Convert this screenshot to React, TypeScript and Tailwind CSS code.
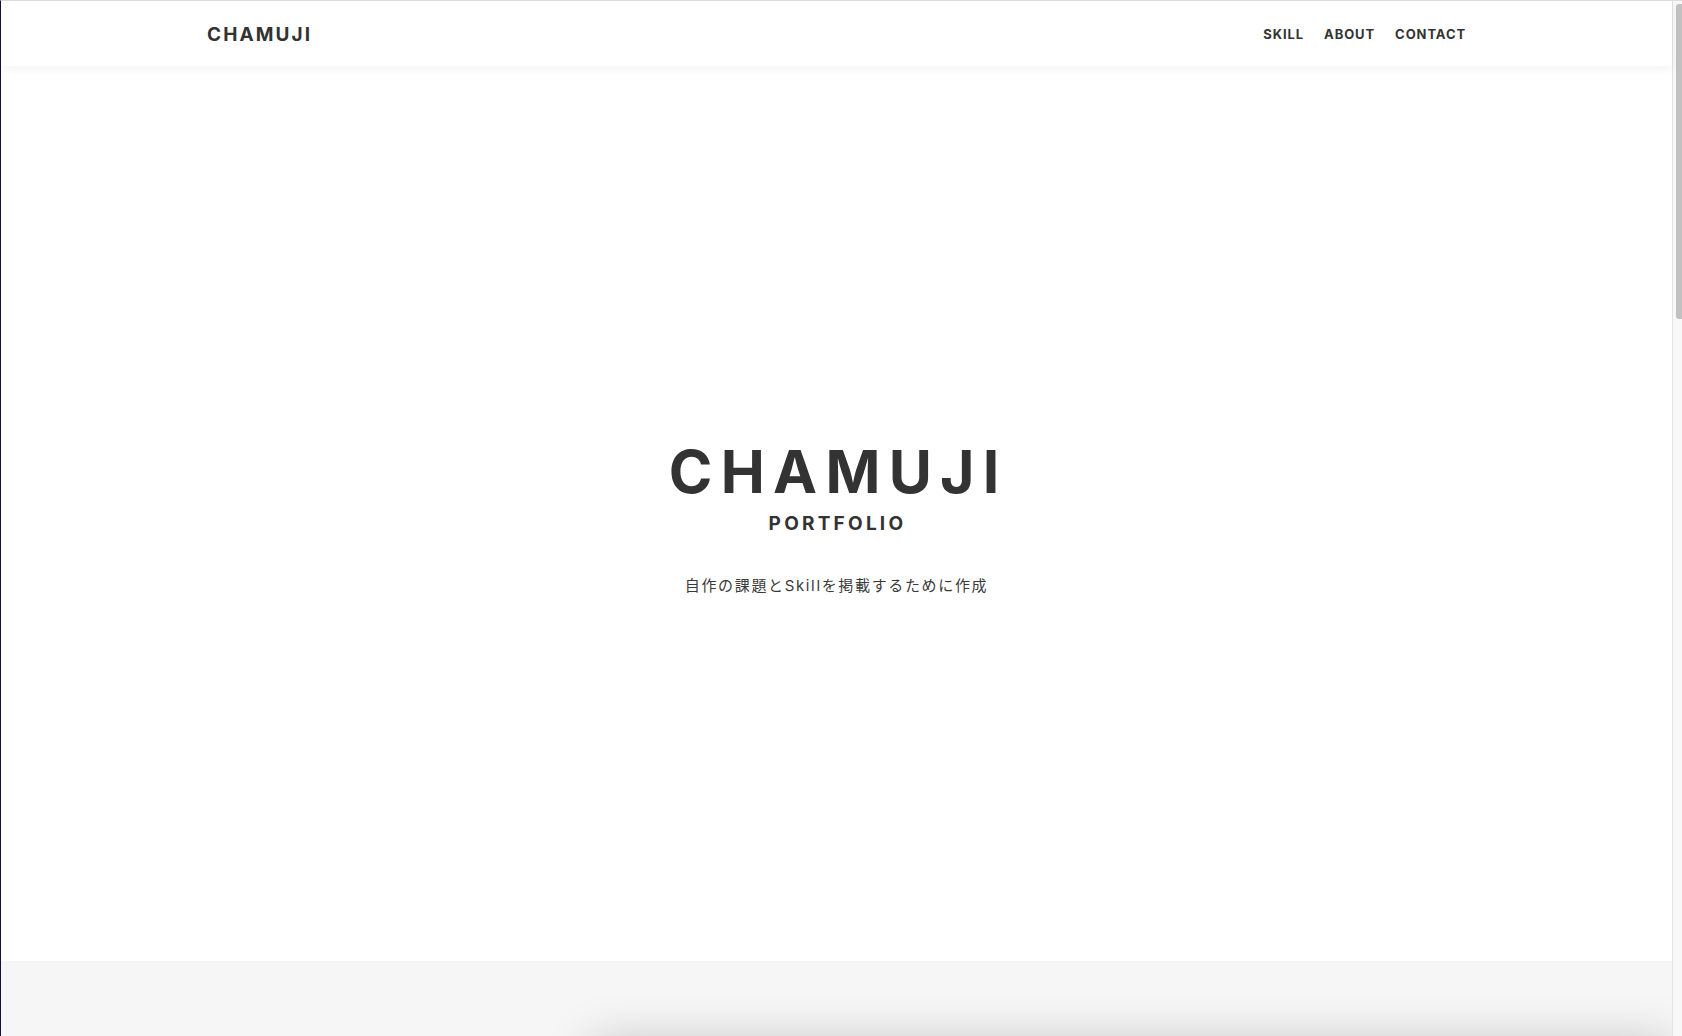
export default function App() {
  const navItems = ["SKILL", "ABOUT", "CONTACT"];

  return (
    <div className="h-screen w-full flex overflow-hidden bg-white border-t border-t-[#dcdcdc] border-l border-l-[#1b0b3b] font-['Inter','Noto_Sans_CJK_JP',sans-serif] text-[#333333]">
      <div className="flex-1 flex flex-col min-w-0">
        {/* header */}
        <header className="relative z-10 h-[65px] shrink-0 bg-white shadow-[0_3px_10px_rgba(0,0,0,0.05)]">
          <div className="max-w-[1259px] mx-auto h-full pt-[2px] flex items-center justify-between">
            <span className="text-[19px] font-bold tracking-[0.11em] leading-none">CHAMUJI</span>
            <nav className="flex items-center gap-[20px]">
              {navItems.map((item) => (
                <a key={item} href="#" className="text-[13px] font-bold tracking-[0.07em] leading-none">
                  {item}
                </a>
              ))}
            </nav>
          </div>
        </header>

        {/* hero */}
        <section className="h-[895px] shrink-0 pt-[7px] flex flex-col items-center justify-center">
          <h1 className="text-[59px] font-bold tracking-[0.14em] leading-none pl-[0.06em]">CHAMUJI</h1>
          <p className="mt-[13px] text-[19px] font-bold tracking-[0.17em] leading-none pl-[0.1em]">PORTFOLIO</p>
          <p className="mt-[45px] text-[15px] tracking-[0.11em] leading-none text-[#3a3a3a]">
            自作の課題とSkillを掲載するために作成
          </p>
        </section>

        {/* skill section (cut off) */}
        <section className="flex-1 bg-[#f6f6f6] pt-[80px]">
          <div className="ml-[590px] h-[400px] bg-white shadow-[0_0_45px_rgba(0,0,0,0.2)]" />
        </section>
      </div>

      {/* scrollbar */}
      <div className="w-[10px] shrink-0 border-l border-l-[#e2e2e2] bg-[#f8f8f8] pt-[3px] flex justify-end">
        <div className="w-[6px] h-[315px] rounded-l-[3px] bg-[#c1c1c1]" />
      </div>
    </div>
  );
}
